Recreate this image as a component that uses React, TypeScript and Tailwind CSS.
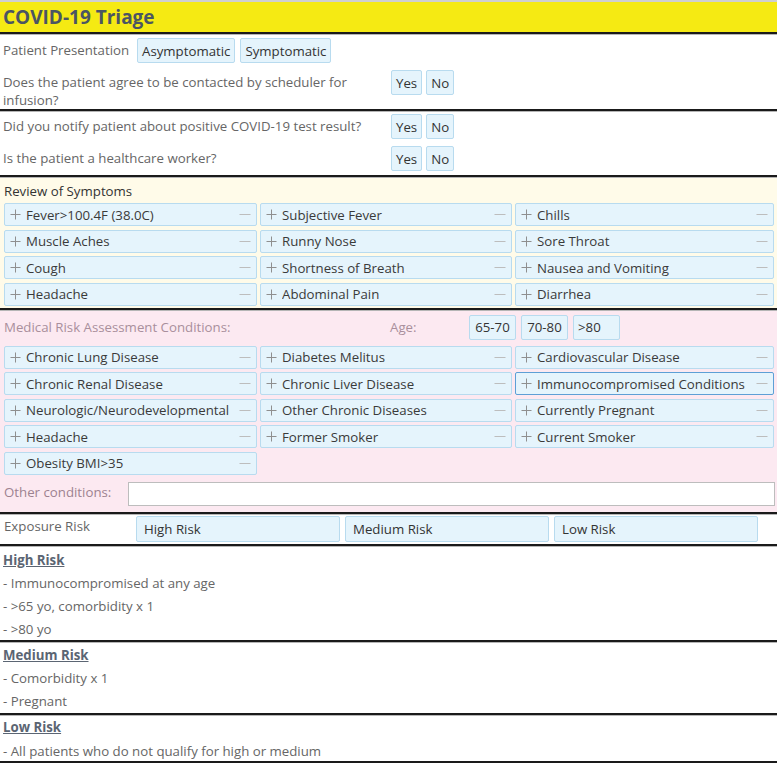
import React from "react";

const font = { fontFamily: "'Open Sans', 'Noto Sans', sans-serif" };

function Divider() {
  return (
    <div className="w-full">
      <div className="h-[2px] bg-[#1a1a1a]" />
      <div className="h-[1px] bg-[#b5b5b5]" />
    </div>
  );
}

function Btn({ children, className = "" }: { children: React.ReactNode; className?: string }) {
  return (
    <div
      className={
        "flex items-center h-[25px] px-[4px] bg-[#e5f4fc] border border-[#b8dbef] rounded-[2px] text-[#333] " +
        className
      }
    >
      {children}
    </div>
  );
}

function Plus() {
  return (
    <svg width="11" height="11" viewBox="0 0 11 11" className="shrink-0">
      <path d="M5.5 0.5V10.5M0.5 5.5H10.5" stroke="#8f8f8f" strokeWidth="1" />
    </svg>
  );
}

function Minus() {
  return (
    <svg width="12" height="11" viewBox="0 0 12 11" className="shrink-0">
      <path d="M0.5 5.5H11.5" stroke="#bdbdbd" strokeWidth="1" />
    </svg>
  );
}

function Item({ label, focus = false }: { label: string; focus?: boolean }) {
  return (
    <div
      className={
        focus
          ? "flex items-center h-[23px] bg-[#e5f4fc] border border-[#5d9fd6] rounded-[2px] pl-[5px] pr-[5px]"
          : "flex items-center h-[23px] bg-[#e5f4fc] border border-[#b8dbef] rounded-[2px] pl-[5px] pr-[5px]"
      }
    >
      <Plus />
      <span className="ml-[5px] flex-1 text-[#3a3a3a] whitespace-nowrap overflow-hidden">{label}</span>
      <Minus />
    </div>
  );
}

function ItemGrid({ items, focusIdx = -1 }: { items: string[]; focusIdx?: number }) {
  return (
    <div className="grid grid-cols-[253px_252px_259px] gap-x-[3px] gap-y-[3.5px] pl-[4px]">
      {items.map((l, i) => (
        <Item key={i} label={l} focus={i === focusIdx} />
      ))}
    </div>
  );
}

function YesNo() {
  return (
    <div className="flex gap-[4px]">
      <Btn>Yes</Btn>
      <Btn>No</Btn>
    </div>
  );
}

export default function App() {
  const symptoms = [
    "Fever>100.4F (38.0C)",
    "Subjective Fever",
    "Chills",
    "Muscle Aches",
    "Runny Nose",
    "Sore Throat",
    "Cough",
    "Shortness of Breath",
    "Nausea and Vomiting",
    "Headache",
    "Abdominal Pain",
    "Diarrhea",
  ];
  const conditions = [
    "Chronic Lung Disease",
    "Diabetes Melitus",
    "Cardiovascular Disease",
    "Chronic Renal Disease",
    "Chronic Liver Disease",
    "Immunocompromised Conditions",
    "Neurologic/Neurodevelopmental",
    "Other Chronic Diseases",
    "Currently Pregnant",
    "Headache",
    "Former Smoker",
    "Current Smoker",
    "Obesity BMI>35",
  ];

  return (
    <div className="w-[777px] bg-white text-[13.25px] leading-[18px] text-[#666]" style={font}>
      {/* Header */}
      <div className="h-[2px] bg-[#cfcfcf]" />
      <div className="h-[30px] bg-[#f5ea13] flex items-center pl-[3px]">
        <span className="text-[19px] font-bold text-[#4b5563] leading-none">COVID-19 Triage</span>
      </div>
      <Divider />

      {/* Section 1 */}
      <div className="pt-[3px]">
        <div className="flex items-start h-[32px]">
          <div className="w-[137px] pl-[3px] pt-[3px]">Patient Presentation</div>
          <div className="flex gap-[5px]">
            <Btn>Asymptomatic</Btn>
            <Btn>Symptomatic</Btn>
          </div>
        </div>
        <div className="flex items-start h-[39px]">
          <div className="w-[391px] pl-[3px] pr-[20px] pt-[3px]">
            Does the patient agree to be contacted by scheduler for infusion?
          </div>
          <YesNo />
        </div>
      </div>
      <Divider />

      {/* Section 2 */}
      <div className="pt-[2px] pb-[3px]">
        <div className="flex items-start h-[32px]">
          <div className="w-[391px] pl-[3px] pt-[3px]">Did you notify patient about positive COVID-19 test result?</div>
          <YesNo />
        </div>
        <div className="flex items-start h-[26px]">
          <div className="w-[391px] pl-[3px] pt-[3px]">Is the patient a healthcare worker?</div>
          <YesNo />
        </div>
      </div>
      <Divider />

      {/* Review of Symptoms */}
      <div className="bg-[#fffbe9] pt-[4px] pb-[2px]">
        <div className="pl-[4px] h-[21px] text-[#333]">Review of Symptoms</div>
        <ItemGrid items={symptoms} />
      </div>
      <Divider />

      {/* Medical Risk */}
      <div className="bg-[#fce9f1] pt-[4px] pb-[6px]">
        <div className="flex items-center h-[25px] mb-[6px]">
          <div className="w-[390px] pl-[4px] text-[#a98f9c]">Medical Risk Assessment Conditions:</div>
          <div className="w-[79px] text-[#a98f9c]">Age:</div>
          <div className="flex gap-[5px]">
            <Btn className="w-[47px] justify-center">65-70</Btn>
            <Btn className="w-[47px] justify-center">70-80</Btn>
            <Btn className="w-[47px]">&gt;80</Btn>
          </div>
        </div>
        <ItemGrid items={conditions} focusIdx={5} />
        <div className="flex items-center mt-[7px] h-[24px]">
          <div className="w-[128px] pl-[4px] text-[#9c8290] pb-[4px]">Other conditions:</div>
          <div className="w-[647px] h-[24px] bg-white border border-[#bdbdbd]" />
        </div>
      </div>
      <Divider />

      {/* Exposure Risk */}
      <div className="flex items-start h-[29px] pt-[1px]">
        <div className="w-[136px] pl-[4px] pt-[1px]">Exposure Risk</div>
        <div className="flex gap-[5px]">
          <Btn className="w-[204px] h-[26px] pl-[7px]">High Risk</Btn>
          <Btn className="w-[204px] h-[26px] pl-[7px]">Medium Risk</Btn>
          <Btn className="w-[204px] h-[26px] pl-[7px]">Low Risk</Btn>
        </div>
      </div>
      <Divider />

      {/* High Risk */}
      <div className="pl-[3px] pt-[2px] h-[93px] leading-[23px]">
        <div className="font-bold underline text-[#5b6573]">High Risk</div>
        <div>- Immunocompromised at any age</div>
        <div>- &gt;65 yo, comorbidity x 1</div>
        <div>- &gt;80 yo</div>
      </div>
      <Divider />
      <div className="pl-[3px] pt-[1px] h-[70px] leading-[23px]">
        <div className="font-bold underline text-[#5b6573]">Medium Risk</div>
        <div>- Comorbidity x 1</div>
        <div>- Pregnant</div>
      </div>
      <Divider />
      <div className="pl-[3px] pt-[0px] h-[45px] leading-[23px]">
        <div className="font-bold underline text-[#5b6573]">Low Risk</div>
        <div className="mt-[1px]">- All patients who do not qualify for high or medium</div>
      </div>
      <Divider />
    </div>
  );
}
